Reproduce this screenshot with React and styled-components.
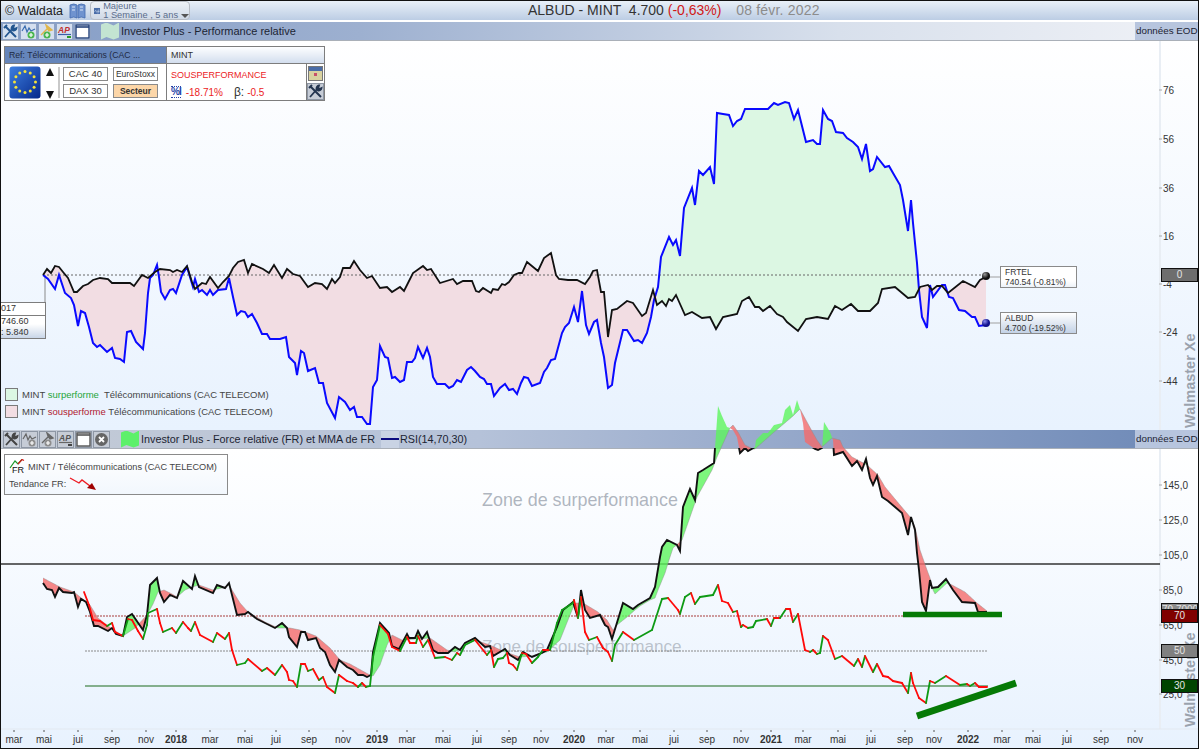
import React from 'react';
import styled, { createGlobalStyle } from 'styled-components';

const BLUE = [[43,275],[48,279],[55,289],[59,275],[65,293],[71,298],[74,305],[78,326],[81,311],[85,313],[89,327],[93,343],[97,347],[100,345],[107,352],[112,348],[115,358],[120,359],[124,362],[127,332],[131,331],[136,342],[143,349],[145,333],[148,293],[150,278],[153,275],[157,265],[159,277],[161,292],[165,299],[170,290],[173,289],[176,293],[182,275],[187,267],[190,277],[193,287],[195,279],[199,292],[202,290],[207,295],[210,290],[213,295],[218,290],[226,289],[229,278],[233,297],[237,315],[241,311],[245,312],[248,317],[252,314],[257,323],[262,334],[267,334],[270,339],[280,339],[286,337],[289,357],[295,363],[297,375],[301,351],[304,353],[308,371],[315,368],[319,383],[323,383],[327,403],[335,418],[339,397],[345,402],[350,410],[354,407],[357,417],[362,417],[367,424],[370,424],[373,387],[377,380],[380,346],[385,357],[388,358],[392,378],[395,377],[400,382],[404,380],[407,362],[412,362],[415,358],[418,347],[423,358],[427,348],[430,357],[433,377],[437,384],[445,384],[449,388],[453,386],[457,380],[461,382],[467,370],[471,367],[475,371],[480,377],[484,379],[487,384],[491,384],[494,396],[500,388],[505,384],[509,390],[513,389],[517,394],[521,383],[524,377],[528,378],[532,386],[540,383],[544,372],[547,368],[551,360],[555,359],[562,333],[565,327],[569,323],[574,307],[578,322],[582,291],[586,325],[589,334],[594,322],[597,320],[601,343],[604,357],[608,388],[612,385],[615,363],[623,330],[627,330],[634,341],[638,340],[642,343],[647,333],[651,317],[654,300],[658,287],[661,257],[669,237],[673,245],[676,240],[680,256],[684,208],[692,188],[695,205],[699,171],[703,175],[710,167],[714,184],[717,113],[723,114],[729,115],[733,126],[737,121],[741,119],[745,109],[758,109],[768,109],[774,103],[778,105],[785,102],[789,103],[794,119],[798,110],[806,142],[813,140],[817,144],[820,144],[823,110],[828,119],[832,121],[836,132],[843,133],[847,138],[853,142],[858,147],[862,159],[866,144],[870,171],[873,169],[877,157],[885,167],[889,166],[893,173],[900,185],[903,200],[908,231],[911,200],[913,223],[917,263],[919,290],[922,317],[927,328],[930,285],[933,297],[942,285],[945,285],[949,297],[953,298],[959,310],[965,311],[972,317],[975,317],[979,326],[986,325]];

const BLACK = [[43,275],[47,269],[51,273],[55,266],[59,267],[63,272],[68,278],[74,292],[77,292],[83,286],[88,284],[93,280],[100,278],[108,279],[112,283],[120,283],[130,283],[134,286],[142,275],[148,278],[155,272],[160,269],[170,270],[173,272],[177,270],[182,272],[187,266],[192,282],[195,289],[202,283],[206,284],[210,277],[218,288],[223,282],[229,276],[233,268],[238,262],[244,260],[248,273],[252,264],[263,269],[269,273],[274,265],[282,278],[287,269],[293,274],[300,276],[308,287],[315,283],[322,284],[327,289],[332,279],[335,283],[340,277],[343,268],[350,268],[354,261],[360,270],[367,278],[372,276],[380,288],[387,287],[392,292],[400,287],[404,291],[408,283],[413,273],[423,266],[427,270],[431,269],[440,283],[453,279],[457,284],[463,281],[472,281],[476,291],[479,292],[483,288],[491,293],[493,289],[498,290],[502,284],[505,285],[509,282],[514,275],[519,273],[522,273],[527,262],[538,271],[544,258],[551,253],[556,275],[559,279],[568,280],[577,280],[585,284],[590,277],[593,271],[597,270],[601,292],[604,292],[608,337],[612,310],[617,309],[627,301],[633,303],[642,316],[646,313],[653,290],[657,305],[662,301],[666,306],[669,299],[672,301],[676,295],[685,315],[692,312],[702,318],[710,317],[716,329],[723,317],[737,314],[742,301],[749,297],[755,307],[759,307],[763,311],[770,306],[777,314],[783,317],[787,322],[798,331],[806,319],[817,317],[828,319],[835,306],[842,310],[851,304],[858,311],[870,311],[878,303],[882,289],[895,287],[908,298],[915,297],[920,287],[928,285],[932,290],[937,286],[942,286],[948,293],[963,281],[975,287],[980,280],[986,277]];

const FR = [[43,583],[47,589],[52,590],[55,597],[59,588],[63,592],[72,593],[74,592],[78,607],[81,599],[86,602],[90,612],[94,626],[98,626],[108,631],[112,628],[116,634],[123,636],[127,617],[132,614],[143,630],[147,615],[150,585],[157,578],[160,593],[164,602],[170,595],[177,598],[183,581],[192,589],[195,576],[199,587],[213,593],[217,585],[225,588],[229,583],[237,615],[245,614],[248,612],[257,619],[267,624],[275,628],[282,623],[287,628],[289,637],[297,647],[301,632],[305,632],[308,640],[316,638],[320,648],[325,652],[330,665],[335,672],[339,660],[347,667],[353,670],[358,675],[363,675],[367,677],[371,675],[373,652],[380,623],[389,633],[392,646],[399,649],[407,634],[409,638],[415,638],[418,631],[422,639],[427,632],[433,650],[438,653],[448,653],[455,647],[460,650],[465,643],[475,638],[485,647],[490,646],[493,656],[505,649],[510,655],[518,660],[523,652],[532,657],[542,653],[547,650],[557,627],[563,610],[573,602],[578,618],[581,590],[585,610],[590,618],[600,615],[605,625],[608,627],[612,639],[623,603],[633,609],[638,605],[650,598],[655,587],[660,557],[662,547],[667,540],[677,545],[680,551],[683,507],[690,489],[695,500],[698,473],[703,470],[714,463],[715,448],[718,406],[722,416],[727,427],[730,428],[733,430],[737,437],[740,453],[745,448],[748,451],[755,447],[756,440],[763,433],[768,433],[774,425],[782,423],[785,410],[790,405],[793,415],[797,400],[800,409],[803,423],[805,442],[815,449],[818,450],[822,448],[824,422],[830,432],[833,440],[834,455],[843,452],[852,466],[857,461],[862,470],[866,459],[870,478],[873,485],[877,476],[882,497],[888,501],[902,513],[908,535],[911,517],[915,530],[917,553],[919,570],[922,602],[926,611],[930,580],[932,588],[938,587],[946,579],[953,590],[962,602],[975,603],[978,612],[987,612]];

const MMA = [[43,578],[60,587],[74,592],[90,605],[98,618],[108,626],[123,636],[135,628],[147,615],[153,604],[158,592],[164,590],[172,594],[177,597],[185,590],[192,587],[199,585],[213,590],[222,588],[229,585],[240,603],[248,612],[265,622],[278,628],[290,628],[300,630],[316,636],[330,648],[340,660],[350,664],[368,674],[373,676],[380,665],[387,645],[392,635],[402,640],[430,638],[447,650],[455,652],[465,645],[475,640],[490,645],[505,652],[520,657],[532,656],[540,653],[547,652],[560,640],[570,615],[575,603],[583,603],[598,612],[607,620],[613,630],[617,625],[627,617],[635,610],[640,606],[650,600],[655,598],[658,590],[665,573],[669,560],[673,548],[682,540],[697,497],[712,470],[717,457],[730,428],[733,425],[738,432],[745,445],[753,449],[755,449],[773,433],[793,416],[800,409],[807,422],[813,433],[817,440],[822,447],[832,438],[840,440],[843,447],[852,457],[867,465],[878,475],[885,487],[900,505],[911,518],[915,527],[920,550],[927,570],[930,578],[933,590],[935,594],[947,583],[952,585],[965,592],[977,603],[987,611]];

const RSI = [[84,592],[89,605],[93,620],[100,621],[107,626],[112,623],[115,632],[123,636],[128,619],[132,620],[138,631],[143,639],[147,625],[148,613],[157,609],[160,623],[163,632],[172,628],[176,633],[183,622],[188,628],[191,631],[195,622],[200,635],[213,642],[217,633],[225,639],[229,633],[232,650],[237,665],[245,663],[248,659],[262,671],[267,668],[275,675],[282,665],[287,672],[289,680],[293,681],[297,687],[301,664],[305,664],[308,671],[313,669],[319,680],[323,677],[327,687],[335,693],[339,675],[347,681],[353,683],[358,687],[362,683],[366,687],[370,686],[373,657],[380,625],[388,634],[392,647],[400,651],[407,637],[410,643],[416,643],[418,636],[423,647],[428,640],[435,658],[445,657],[452,660],[457,653],[460,655],[465,645],[475,640],[487,655],[491,650],[494,667],[498,659],[503,658],[507,653],[509,663],[513,665],[517,670],[522,653],[526,654],[532,663],[538,657],[543,650],[550,650],[557,623],[562,610],[573,603],[574,600],[578,618],[581,597],[585,632],[589,640],[597,637],[603,648],[608,652],[612,661],[615,645],[623,632],[634,640],[652,630],[662,599],[668,598],[678,610],[680,614],[685,597],[691,593],[695,604],[700,597],[713,595],[718,585],[722,601],[728,603],[733,612],[737,611],[741,627],[743,625],[748,628],[753,627],[756,621],[767,619],[771,626],[774,618],[780,618],[786,609],[790,609],[793,622],[798,614],[805,650],[810,652],[813,650],[817,654],[820,653],[823,636],[828,640],[835,659],[842,656],[854,666],[858,659],[862,667],[865,656],[873,672],[877,664],[883,676],[888,677],[893,681],[902,683],[908,693],[911,673],[913,683],[919,698],[926,703],[930,681],[935,683],[946,676],[960,685],[967,684],[970,686],[975,683],[979,687],[987,687]];

const MONTHS = [
  ['mar',14],['mai',44],['jui',78],['sep',112],['nov',146],['2018',176,1],['mar',210],['mai',245],['jui',276],['sep',309],['nov',343],
  ['2019',377,1],['mar',407],['mai',443],['jui',477],['sep',509],['nov',541],['2020',574,1],['mar',606],['mai',640],['jui',674],['sep',707],['nov',741],
  ['2021',771,1],['mar',803],['mai',838],['jui',871],['sep',905],['nov',934],['2022',968,1],['mar',1002],['mai',1033],['jui',1067],['sep',1101],['nov',1135],
];

const TOP_TICKS = [[76,90],[56,139],[36,188],[16,236],[-4,284],[-24,332],[-44,381]];
const FR_TICKS = [['145,0',485],['125,0',520],['105,0',555],['85,0',590],['65,0',625],['45,0',660],['25,0',694]];

const toPoints = (pts) => pts.map((p) => p.join(',')).join(' ');

const yAt = (pts, x) => {
  for (let i = 1; i < pts.length; i++) {
    if (x <= pts[i][0]) {
      const [x0, y0] = pts[i - 1];
      const [x1, y1] = pts[i];
      return x1 === x0 ? y1 : y0 + ((y1 - y0) * (x - x0)) / (x1 - x0);
    }
  }
  return pts[pts.length - 1][1];
};

// area between two lines on [x0, x1]
const area = (a, b, x0, x1) => {
  const upper = [];
  const lower = [];
  for (let x = x0; x <= x1; x += 0.5) {
    upper.push([x, yAt(a, x)]);
    lower.unshift([x, yAt(b, x)]);
  }
  return toPoints([...upper, ...lower]);
};

// same area, cut where the two lines cross
const bands = (a, b, x0, x1) => {
  const out = [];
  let start = x0;
  let above = yAt(a, x0) < yAt(b, x0);
  for (let x = x0; x <= x1; x += 0.5) {
    const now = yAt(a, x) < yAt(b, x);
    if (now !== above || x === x1) {
      out.push({ above, points: area(a, b, start, x) });
      start = x;
      above = now;
    }
  }
  return out;
};

const GlobalStyle = createGlobalStyle`
  html, body { margin: 0; padding: 0; background: #fff; overflow: hidden; }
  body { font-family: "Liberation Sans", Arial, sans-serif; color: #222; }
`;

const Frame = styled.div`
  width: 1199px;
  height: 749px;
  box-sizing: border-box;
  border: 1px solid #111;
  background: #fff;
  display: flex;
  flex-direction: column;
  overflow: hidden;
`;

const TitleBar = styled.div`
  height: 19px;
  margin-bottom: 2px;
  flex: none;
  position: relative;
  display: flex;
  align-items: center;
  padding-left: 4px;
  background: linear-gradient(#e9f0f8, #bccde4);
`;

const Brand = styled.span`
  font-size: 12.5px;
  color: #222;
  margin-right: 6px;
  white-space: nowrap;
`;

const PeriodButton = styled.div`
  margin-left: 4px;
  width: 100px;
  height: 19px;
  box-sizing: border-box;
  border: 1px solid #b7bcc4;
  border-radius: 4px;
  background: linear-gradient(#eef2f7, #cfd9e6);
  display: flex;
  align-items: center;
  padding-left: 3px;
  gap: 3px;
`;

const PeriodText = styled.div`
  font-size: 9.3px;
  line-height: 8.5px;
  color: #5b6d8c;
  white-space: nowrap;
`;

const Caret = styled.span`
  display: inline-block;
  margin-left: 3px;
  border-left: 4px solid transparent;
  border-right: 4px solid transparent;
  border-top: 4px solid #555;
`;

const Quote = styled.div`
  position: absolute;
  left: 527px;
  top: 1px;
  font-size: 14px;
  color: #333;
  white-space: pre;
`;

const Loss = styled.span`
  color: #d01818;
`;

const QuoteDate = styled.span`
  color: #8c8c8c;
  margin-left: 3px;
  letter-spacing: 0.2px;
`;

const PaneHeader = styled.div`
  height: 19px;
  flex: none;
  box-sizing: border-box;
  border-bottom: 1px solid #aab0b8;
  display: flex;
  align-items: center;
  gap: 1px;
  padding-left: ${(p) => (p.$muted ? 2 : 1)}px;
  font-size: ${(p) => (p.$muted ? 10.8 : 11)}px;
  color: #1c2433;
  background: ${(p) => (p.$muted
    ? 'linear-gradient(90deg, #c4cbd6 0%, #b5c2d9 40%, #8a9fc5 75%, #6c88b6 100%)'
    : 'linear-gradient(90deg, #859dc6 0%, #9db0d0 30%, #d8e0ec 70%, #f0f2f7 100%)')};
`;

const ToolIcon = styled.span`
  width: 17px;
  height: 17px;
  flex: none;
  box-sizing: border-box;
  border: 1px solid ${(p) => (p.$muted ? '#8d96a4' : '#8ea2c4')};
  background: ${(p) => (p.$muted ? '#c6ccd6' : '#d5dfef')};
  display: flex;
  align-items: center;
  justify-content: center;
`;

const Swatch = styled.span`
  width: 18px;
  height: 17px;
  flex: none;
  margin-left: ${(p) => p.$gap}px;
  margin-right: 1px;
  background: ${(p) => p.$color};
  clip-path: polygon(0 12%, 30% 0, 70% 18%, 100% 0, 100% 88%, 70% 100%, 30% 85%, 0 100%);
`;

const HeaderTitle = styled.span`
  white-space: nowrap;
`;

const RsiKey = styled.span`
  margin-left: 5px;
  width: 18px;
  height: 17px;
  flex: none;
  display: flex;
  align-items: center;
  background: #c9d3e4;
  &::before {
    content: '';
    width: 100%;
    height: 2px;
    background: #0a0a80;
  }
`;

const EodCell = styled.span`
  margin-left: auto;
  width: 63px;
  height: 18px;
  flex: none;
  box-sizing: border-box;
  padding-left: 1px;
  font-size: 9.8px;
  line-height: 18px;
  white-space: nowrap;
  background: #b7c5de;
`;

const ChartPane = styled.div`
  position: relative;
  flex: ${(p) => (p.$grow ? '1' : 'none')};
  height: ${(p) => (p.$grow ? 'auto' : '389px')};
  background: linear-gradient(#ffffff, #e8f2fe);
`;

const ChartSvg = styled.svg`
  display: block;
  overflow: visible;
  position: relative;
  text {
    font-family: "Liberation Sans", Arial, sans-serif;
  }
`;

const InfoBox = styled.div`
  position: absolute;
  left: 3px;
  top: 5px;
  width: 321px;
  height: 55px;
  box-sizing: border-box;
  border: 1px solid #7d7d7d;
  background: #fff;
  display: grid;
  grid-template-columns: 161px 1fr 17px;
  grid-template-rows: 17px 1fr;
  font-size: 10px;
`;

const RefHead = styled.div`
  background: #6585ba;
  color: #1f2b44;
  font-size: 8.7px;
  line-height: 17px;
  padding-left: 4px;
  border-bottom: 1px solid #7d7d7d;
  white-space: nowrap;
`;

const NameHead = styled.div`
  grid-column: 2 / 4;
  background: linear-gradient(#fdfeff, #d3deee);
  border-left: 1px solid #7d7d7d;
  border-bottom: 1px solid #7d7d7d;
  line-height: 17px;
  padding-left: 4px;
  font-size: 9px;
  color: #333;
`;

const IndexCell = styled.div`
  display: flex;
  align-items: center;
  padding-left: 4px;
  gap: 3px;
`;

const Arrows = styled.div`
  width: 11px;
  height: 33px;
  display: flex;
  flex-direction: column;
  justify-content: space-between;
  align-items: center;
  padding: 2px 0 0;
  box-sizing: border-box;
`;

const Triangle = styled.span`
  border-left: 4.5px solid transparent;
  border-right: 4.5px solid transparent;
  border-${(p) => (p.$down ? 'top' : 'bottom')}: 8px solid #111;
`;

const IndexGrid = styled.div`
  padding-left: 3px;
  border-left: 2px solid #c9c9c9;
  display: grid;
  grid-template-columns: 45px 45px;
  grid-template-rows: 14px 14px;
  gap: 3px 5px;
`;

const IndexButton = styled.div`
  box-sizing: border-box;
  border: 1px solid #8a8a8a;
  background: ${(p) => (p.$active ? '#fcd6a8' : '#fff')};
  font-size: ${(p) => (p.$small ? 8.5 : 9.5)}px;
  font-weight: ${(p) => (p.$active ? 700 : 400)};
  color: #333;
  text-align: center;
  line-height: 12px;
`;

const Verdict = styled.div`
  border-left: 1px solid #7d7d7d;
  border-right: 1px solid #7d7d7d;
  padding: 5px 0 0 4px;
  color: #ec1c24;
`;

const VerdictTitle = styled.div`
  font-size: 9px;
  line-height: 13px;
`;

const VerdictRow = styled.div`
  margin-top: 3px;
  display: flex;
  align-items: center;
  font-size: 10px;
  gap: 3px;
`;

const PctMark = styled.span`
  color: #2644a8;
  font-size: 10px;
  font-weight: 700;
  letter-spacing: -1px;
  border-top: 1px dotted #2644a8;
  border-bottom: 1px dotted #2644a8;
  line-height: 10px;
  margin-right: 2px;
`;

const Beta = styled.span`
  color: #333;
  font-size: 12px;
  margin-left: 8px;
`;

const SideTools = styled.div`
  display: flex;
  flex-direction: column;
  align-items: center;
  gap: 2px;
  padding-top: 2px;
`;

const Legend = styled.div`
  position: absolute;
  left: 4px;
  top: 347px;
  display: flex;
  flex-direction: column;
  gap: 4px;
`;

const LegendRow = styled.div`
  display: flex;
  align-items: center;
  gap: 4px;
  height: 13px;
  font-size: 9.5px;
  color: #444;
  white-space: pre;
`;

const LegendBox = styled.span`
  width: 13px;
  height: 13px;
  box-sizing: border-box;
  border: 1px solid #7a7a7a;
  background: ${(p) => p.$color};
`;

const Word = styled.span`
  color: ${(p) => p.$color};
`;

const CursorBox = styled.div`
  position: absolute;
  left: -1px;
  top: 261px;
  width: 46px;
  height: 37px;
  box-sizing: border-box;
  border: 1px solid #7d7d7d;
  border-left: 0;
  font-size: 9px;
  color: #333;
  background: linear-gradient(#fff 60%, #c9d6e8);
`;

const CursorRow = styled.div`
  height: 11.5px;
  line-height: 11.5px;
  padding-left: 1px;
  border-bottom: ${(p) => (p.$line ? '1px solid #7d7d7d' : '0')};
  white-space: nowrap;
`;

const QuoteBox = styled.div`
  position: absolute;
  left: 999px;
  top: ${(p) => p.$top}px;
  width: 77px;
  height: 22px;
  box-sizing: border-box;
  border: 1px solid #8a8a8a;
  padding-left: 4px;
  font-size: 8.5px;
  line-height: 10px;
  color: #333;
  background: ${(p) => (p.$tinted ? 'linear-gradient(#fff, #c3d2e6)' : 'linear-gradient(#fff 70%, #edf2f8)')};
  white-space: nowrap;
`;

const LevelBadge = styled.div`
  position: absolute;
  left: 1160px;
  top: ${(p) => p.$top}px;
  width: 37px;
  height: 14px;
  box-sizing: border-box;
  border: 1px solid #111;
  background: ${(p) => p.$color};
  color: #e4e4e4;
  text-align: center;
  font-size: 10px;
  line-height: 12px;
  overflow: hidden;
`;

const TrendBox = styled.div`
  position: absolute;
  left: 3px;
  top: 5px;
  width: 224px;
  height: 41px;
  box-sizing: border-box;
  border: 1px solid #8a8a8a;
  background: linear-gradient(#fff, #f2f7fd);
  padding: 3px 0 0 4px;
  font-size: 9.2px;
  color: #444;
`;

const TrendRow = styled.div`
  display: flex;
  align-items: center;
  gap: 3px;
  height: 17px;
  white-space: nowrap;
`;

const ZoneLabel = styled.div`
  position: absolute;
  left: 481px;
  top: ${(p) => p.$top}px;
  font-size: ${(p) => p.$size}px;
  color: rgba(150, 158, 170, ${(p) => p.$alpha});
  white-space: nowrap;
`;

const ToolsGlyph = ({ color }) => (
  <svg width="15" height="15" viewBox="0 0 15 15">
    <path d="M2 13 L10 4 M11 1.5 a3 3 0 0 0 -2.5 3.5 l1.5 1.5 a3 3 0 0 0 3.5 -2.5 l-2 1 -1.2 -1.2 z" stroke={color} strokeWidth="1.8" fill={color} />
    <path d="M2 2 L13 13 M1 4 L4 1" stroke={color} strokeWidth="2" fill="none" />
  </svg>
);

const LineGlyph = ({ color, plus }) => (
  <svg width="15" height="15" viewBox="0 0 15 15">
    <path d="M1 7 L4 2 L6 8 L8 4 L10 7 L14 5" stroke={color} strokeWidth="1.2" fill="none" />
    <circle cx="10" cy="11" r="3.5" fill={plus} />
    <path d="M10 9 V13 M8 11 H12" stroke="#fff" strokeWidth="1.2" />
  </svg>
);

const PinGlyph = ({ color, plus }) => (
  <svg width="15" height="15" viewBox="0 0 15 15">
    <path d="M2 11 L8 5 M7 1 L13 6 L10 7 L8 4 Z" stroke={color} strokeWidth="1.4" fill={color} />
    <circle cx="8" cy="11" r="3.5" fill={plus} />
    <path d="M8 9 V13 M6 11 H10" stroke="#fff" strokeWidth="1.2" />
  </svg>
);

const ApGlyph = ({ color, mark, line }) => (
  <svg width="15" height="15" viewBox="0 0 15 15">
    <text x="1" y="8.5" fontSize="8.5" fontWeight="700" fontStyle="italic" fontFamily="Liberation Sans" fill={color}>AP</text>
    <path d="M1 10.5 H14" stroke={line} strokeWidth="1.2" />
    <path d="M10 13 H14" stroke={mark} strokeWidth="2" />
  </svg>
);

const WindowGlyph = ({ color }) => (
  <svg width="15" height="15" viewBox="0 0 15 15">
    <rect x="1" y="1" width="13" height="13" fill="#fff" stroke={color} strokeWidth="1.4" />
    <path d="M1 3 H14" stroke={color} strokeWidth="1.6" />
  </svg>
);

const CloseGlyph = () => (
  <svg width="15" height="15" viewBox="0 0 15 15">
    <circle cx="7.5" cy="7.5" r="6.5" fill="#666" />
    <path d="M5 5 L10 10 M10 5 L5 10" stroke="#fff" strokeWidth="1.8" />
  </svg>
);

const BookGlyph = () => (
  <svg width="17" height="16" viewBox="0 0 17 16">
    <path d="M1 2 Q5 0 8 2 V15 Q5 13 1 15 Z M16 2 Q12 0 9 2 V15 Q12 13 16 15 Z" fill="#6f93cf" stroke="#3f68ad" strokeWidth="0.8" />
    <path d="M3 4 H6 M3 7 H6 M11 4 H14 M11 7 H14" stroke="#dbe6f7" strokeWidth="1" />
  </svg>
);

const PeriodGlyph = () => (
  <svg width="14" height="14" viewBox="0 0 14 14">
    <rect width="14" height="14" fill="#4a6da8" />
    <path d="M1 9 L4 5 L6 10 L9 6 V13 M9 8 H13 M11 3 V11" stroke="#dfe9f8" strokeWidth="1" fill="none" />
  </svg>
);

const EuroFlag = () => (
  <svg width="32" height="33" viewBox="0 0 32 33">
    <defs>
      <linearGradient id="euroBlue" x1="0" y1="0" x2="1" y2="1">
        <stop offset="0" stopColor="#3d7fe0" />
        <stop offset="1" stopColor="#06288a" />
      </linearGradient>
    </defs>
    <rect x="0.5" y="0.5" width="31" height="32" rx="3" fill="url(#euroBlue)" />
    {Array.from({ length: 12 }).map((_, i) => (
      <circle
        key={i}
        cx={16 + 10.5 * Math.cos((i * Math.PI) / 6)}
        cy={16 + 10.5 * Math.sin((i * Math.PI) / 6)}
        r="1.5"
        fill="#f4e23a"
      />
    ))}
  </svg>
);

const CalendarGlyph = () => (
  <svg width="15" height="15" viewBox="0 0 15 15">
    <rect x="0.5" y="0.5" width="14" height="14" fill="#d9d2a0" stroke="#777" />
    <rect x="1" y="1" width="13" height="4" fill="#4a6da8" />
    <rect x="6" y="7" width="3" height="3" fill="#c8506a" />
  </svg>
);

const FrGlyph = () => (
  <svg width="16" height="16" viewBox="0 0 16 16">
    <path d="M1 9 L6 2 L9 5 L13 0.5" stroke="#1a9a2a" strokeWidth="1.2" fill="none" />
    <path d="M9 5 L13 0.5 L15 1.5" stroke="#d01818" strokeWidth="1.2" fill="none" />
    <text x="3" y="14" fontSize="9" fontFamily="Liberation Sans" fill="#111">FR</text>
  </svg>
);

const TrendArrow = () => (
  <svg width="28" height="14" viewBox="0 0 28 14">
    <path d="M1 1 L10 6 L13 3 L21 9" stroke="#ee1c24" strokeWidth="1.4" fill="none" />
    <path d="M18 11 L23 6 L27 13 Z" fill="#a00000" />
  </svg>
);

const TopChart = () => (
  <ChartSvg width="1197" height="389" viewBox="1 41 1197 389">
    <defs>
      <radialGradient id="ballBlack" cx="0.35" cy="0.3">
        <stop offset="0" stopColor="#999" />
        <stop offset="1" stopColor="#111" />
      </radialGradient>
      <radialGradient id="ballBlue" cx="0.35" cy="0.3">
        <stop offset="0" stopColor="#8a8af0" />
        <stop offset="1" stopColor="#10108c" />
      </radialGradient>
    </defs>
    <polygon points={area(BLUE, BLACK, 43, 657)} fill="#f2dde3" />
    <polygon points={area(BLUE, BLACK, 657, 918)} fill="#dcf7e3" />
    <polygon points={area(BLUE, BLACK, 918, 986)} fill="#f2dde3" />
    <path d="M43 275 H986" stroke="#666" strokeWidth="1" strokeDasharray="2 2" />
    <path d="M45 275 V302" stroke="#8a8a8a" strokeWidth="1" />
    <path d="M986 277 H1000 M986 323 H1000" stroke="#a0a0a0" strokeWidth="1.2" />
    <polyline points={toPoints(BLUE)} fill="none" stroke="#0a0aff" strokeWidth="2" />
    <polyline points={toPoints(BLACK)} fill="none" stroke="#111" strokeWidth="1.8" />
    <circle cx="986" cy="276" r="4" fill="url(#ballBlack)" />
    <circle cx="986" cy="323" r="4" fill="url(#ballBlue)" />
    <rect x="1159" y="41" width="2" height="389" fill="#e9eef4" />
    {TOP_TICKS.map(([label, y]) => (
      <g key={label}>
        <path d={`M1159 ${y} H1162`} stroke="#aaa" />
        <text x="1163" y={y + 4} fontSize="10" fill="#333">{label}</text>
      </g>
    ))}
    <text transform="translate(1195 428) rotate(-90)" fontSize="14.5" fontWeight="700" fill="#9aa2ad">Walmaster Xe</text>
  </ChartSvg>
);

const BottomChart = () => (
  <ChartSvg width="1197" height="298" viewBox="1 449 1197 298">
    <defs>
      <clipPath id="belowHeader">
        <rect x="0" y="448" width="1198" height="301" />
      </clipPath>
    </defs>
    <rect x="1159" y="449" width="2" height="280" fill="#e9eef4" />
    <path d="M0 729 H1198" stroke="#e3e9f0" strokeWidth="1" />
    <path d="M0 564 H1160" stroke="#333" strokeWidth="1.4" />
    <path d="M85 616 H903" stroke="#a83c3c" strokeWidth="1.2" strokeDasharray="2 1" />
    <path d="M85 651 H988" stroke="#8a8a8a" strokeWidth="1.2" strokeDasharray="2 1" />
    <path d="M85 686 H988" stroke="#1c6a1c" strokeWidth="1.2" />
    <text transform="translate(1195 727) rotate(-90)" fontSize="14.5" fontWeight="700" fill="#9aa2ad">Walmaster Xe</text>
    {bands(FR, MMA, 43, 987).map((b, i) => (
      <polygon key={i} points={b.points} fill={b.above ? '#5df55d' : '#f56a6a'} opacity="0.8" />
    ))}
    <polyline points={toPoints(MMA)} fill="none" stroke="#8c8c8c" strokeWidth="0.8" opacity="0.55" />
    <polyline points={toPoints(FR)} fill="none" stroke="#111" strokeWidth="1.9" clipPath="url(#belowHeader)" />
    {RSI.slice(1).map((p, i) => (
      <line
        key={i}
        x1={RSI[i][0]}
        y1={RSI[i][1]}
        x2={p[0]}
        y2={p[1]}
        stroke={p[1] < RSI[i][1] ? '#0e9a14' : '#ff0a0a'}
        strokeWidth="1.8"
        strokeLinecap="round"
      />
    ))}
    <path d="M903 614.5 H1002" stroke="#067a06" strokeWidth="5.5" />
    <path d="M917 716 L1016 683" stroke="#067a06" strokeWidth="7" />
    {FR_TICKS.map(([label, y]) => (
      <g key={label}>
        <path d={`M1159 ${y} H1162`} stroke="#aaa" />
        <text x="1163" y={y + 4} fontSize="10" fill="#333">{label}</text>
      </g>
    ))}
    {MONTHS.map(([label, x, bold]) => (
      <g key={label + x}>
        <path d={`M${x} 730 V732`} stroke="#555" />
        <text x={x} y="743" fontSize="10" fontWeight={bold ? 700 : 400} textAnchor="middle" fill="#333">{label}</text>
      </g>
    ))}
  </ChartSvg>
);

const App = () => (
  <>
    <GlobalStyle />
    <Frame>
      <TitleBar>
        <Brand>© Waldata</Brand>
        <BookGlyph />
        <PeriodButton>
          <PeriodGlyph />
          <PeriodText>
            Majeure<br />1 Semaine , 5 ans<Caret />
          </PeriodText>
        </PeriodButton>
        <Quote>
          ALBUD - MINT  4.700 <Loss>(-0,63%)</Loss>   <QuoteDate>08 févr. 2022</QuoteDate>
        </Quote>
      </TitleBar>

      <PaneHeader>
        <ToolIcon><ToolsGlyph color="#23558f" /></ToolIcon>
        <ToolIcon><LineGlyph color="#3a6db0" plus="#49b64f" /></ToolIcon>
        <ToolIcon><PinGlyph color="#e0b64a" plus="#49b64f" /></ToolIcon>
        <ToolIcon><ApGlyph color="#c03030" mark="#2a9a2a" line="#3a5fa8" /></ToolIcon>
        <ToolIcon><WindowGlyph color="#23407a" /></ToolIcon>
        <Swatch $gap={9} $color="#c3e4d2" />
        <HeaderTitle>Investor Plus - Performance relative</HeaderTitle>
        <EodCell>données EOD</EodCell>
      </PaneHeader>

      <ChartPane>
        <TopChart />
        <InfoBox>
          <RefHead>Ref: Télécommunications (CAC ...</RefHead>
          <NameHead>MINT</NameHead>
          <IndexCell>
            <EuroFlag />
            <Arrows>
              <Triangle />
              <Triangle $down />
            </Arrows>
            <IndexGrid>
              <IndexButton>CAC 40</IndexButton>
              <IndexButton $small>EuroStoxx</IndexButton>
              <IndexButton>DAX 30</IndexButton>
              <IndexButton $small $active>Secteur</IndexButton>
            </IndexGrid>
          </IndexCell>
          <Verdict>
            <VerdictTitle>SOUSPERFORMANCE</VerdictTitle>
            <VerdictRow>
              <PctMark>%I</PctMark>-18.71%
              <Beta>β:</Beta>-0.5
            </VerdictRow>
          </Verdict>
          <SideTools>
            <CalendarGlyph />
            <ToolIcon $muted><ToolsGlyph color="#23344f" /></ToolIcon>
          </SideTools>
        </InfoBox>
        <CursorBox>
          <CursorRow $line>017</CursorRow>
          <CursorRow>746.60</CursorRow>
          <CursorRow>: 5.840</CursorRow>
        </CursorBox>
        <Legend>
          <LegendRow>
            <LegendBox $color="#dcf7e3" />
            <span>MINT <Word $color="#1ea53a">surperforme</Word>  Télécommunications (CAC TELECOM)</span>
          </LegendRow>
          <LegendRow>
            <LegendBox $color="#f2dde3" />
            <span>MINT <Word $color="#b02030">sousperforme</Word> Télécommunications (CAC TELECOM)</span>
          </LegendRow>
        </Legend>
        <QuoteBox $top={225}>FRTEL<br />740.54 (-0.81%)</QuoteBox>
        <QuoteBox $top={271} $tinted>ALBUD<br />4.700 (-19.52%)</QuoteBox>
        <LevelBadge $top={227} $color="#6e6e6e">0</LevelBadge>
      </ChartPane>

      <PaneHeader $muted>
        <ToolIcon $muted><ToolsGlyph color="#444" /></ToolIcon>
        <ToolIcon $muted><LineGlyph color="#666" plus="#8d8d8d" /></ToolIcon>
        <ToolIcon $muted><PinGlyph color="#666" plus="#8d8d8d" /></ToolIcon>
        <ToolIcon $muted><ApGlyph color="#555" mark="#444" line="#666" /></ToolIcon>
        <ToolIcon $muted><WindowGlyph color="#555" /></ToolIcon>
        <ToolIcon $muted><CloseGlyph /></ToolIcon>
        <Swatch $gap={10} $color="#5df06a" />
        <HeaderTitle>Investor Plus - Force relative (FR) et MMA de FR</HeaderTitle>
        <RsiKey />
        <HeaderTitle>RSI(14,70,30)</HeaderTitle>
        <EodCell>données EOD</EodCell>
      </PaneHeader>

      <ChartPane $grow>
        <ZoneLabel $top={41} $size={17.9} $alpha={0.75}>Zone de surperformance</ZoneLabel>
        <ZoneLabel $top={188} $size={17.1} $alpha={0.6}>Zone de sousperformance</ZoneLabel>
        <BottomChart />
        <TrendBox>
          <TrendRow><FrGlyph />MINT / Télécommunications (CAC TELECOM)</TrendRow>
          <TrendRow>Tendance FR: <TrendArrow /></TrendRow>
        </TrendBox>
        <LevelBadge $top={154} $color="#8c8c8c">70,7000</LevelBadge>
        <LevelBadge $top={160} $color="#800000">70</LevelBadge>
        <LevelBadge $top={195} $color="#808080">50</LevelBadge>
        <LevelBadge $top={230} $color="#004400">30</LevelBadge>
      </ChartPane>
    </Frame>
  </>
);

export default App;
